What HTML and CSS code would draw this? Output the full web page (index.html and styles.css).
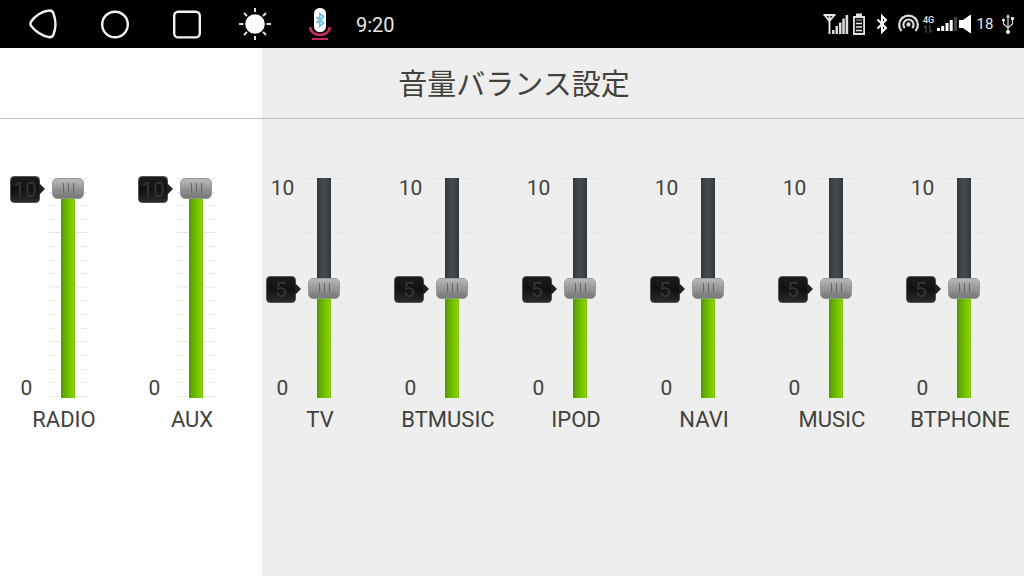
FILE: index.html
```html
<!DOCTYPE html>
<html lang="ja">
<head>
<meta charset="utf-8">
<meta name="viewport" content="width=device-width, initial-scale=1">
<title>音量バランス設定</title>
<link rel="stylesheet" href="styles.css">
</head>
<body>
<svg class="defs" aria-hidden="true">
  <symbol id="ticks" viewBox="0 0 38 220">
    <g class="ticks-high">
      <path d="M0 .5h38M0 54.500h38M0 109h38"/>
      <path d="M0 14.500h6M0 27.500h6M0 41.500h6M0 68.500h6M0 82.500h6M0 95.500h6M32 14.500h6M32 27.500h6M32 41.500h6M32 68.500h6M32 82.500h6M32 95.500h6"/>
    </g>
    <g class="ticks-low">
      <path d="M0 163.500h38M0 218.500h38"/>
      <path d="M0 122.500h6M0 136.500h6M0 150.500h6M0 177.500h6M0 191.500h6M0 204.500h6M32 122.500h6M32 136.500h6M32 150.500h6M32 177.500h6M32 191.500h6M32 204.500h6"/>
    </g>
  </symbol>
</svg>

<header class="status-bar">
  <nav class="nav-keys" aria-label="ナビゲーション">
    <button class="key" type="button" aria-label="戻る">
      <svg class="outline" width="28" height="30" viewBox="0 0 28 30"><path d="M2.200 12.500C6 6.500 13.500 2 20.500 1.500C22.500 1.400 23.500 2.200 24.300 4C27 11 27 19 24.500 25.500C23.600 27.500 22.500 28.500 20.500 28.300C13.500 27 6.500 22.500 2.200 17C1 15.300 1 14.200 2.200 12.500Z"/></svg>
    </button>
    <button class="key" type="button" aria-label="ホーム">
      <svg class="outline" width="28" height="30" viewBox="0 0 28 30"><circle cx="14" cy="15.500" r="12.800"/></svg>
    </button>
    <button class="key" type="button" aria-label="履歴">
      <svg class="outline" width="28" height="30" viewBox="0 0 28 30"><rect x="1.200" y="2.800" width="25.600" height="25.600" rx="4"/></svg>
    </button>
  </nav>
  <div class="quick-keys">
    <button class="key" type="button" aria-label="明るさ">
      <svg width="32" height="32" viewBox="0 0 32 32"><circle cx="16" cy="16" r="9.800" fill="#fff"/><path d="M16 0v4M16 28v4M0 16h4.500M27.500 16H32M5 5l3 3M24 24l3 3M27 5l-3 3M8 24l-3 3" stroke="#ddd" stroke-width="2"/></svg>
    </button>
    <button class="key" type="button" aria-label="音声">
      <svg width="22" height="34" viewBox="0 0 22 34"><rect x="5" y="1" width="12" height="24" rx="5.500" fill="#fff"/><path d="M7.500 10l7 6-3.700 3.500V6.500l3.700 3.300-7 6.200" fill="none" stroke="#6fc0ea" stroke-width="1.800"/><path d="M1 20c1.500 10.500 18.500 10.500 20 0" fill="none" stroke="#c52a60" stroke-width="2.800"/><path d="M3 32h16" stroke="#c52a60" stroke-width="2"/></svg>
    </button>
  </div>
  <time class="clock">9:20</time>
  <div class="indicators">
    <svg width="26" height="24" viewBox="0 0 26 24" aria-label="電波"><path d="M0.500 3h12M2 3.500l4.500 5.500L11 3.500M6.500 3v19" fill="none" stroke="#e8e8e8" stroke-width="1.900"/><path d="M9 18h2.500v4H9zM12.500 14H15v8h-2.500zM16 10.500h2.500V22H16zM19.300 6.500h2.500V22h-2.500zM22.600 3h2.600v19h-2.600z" fill="#ddd"/></svg>
    <svg width="16" height="24" viewBox="0 0 16 24" aria-label="電池"><path d="M5 1.500h6V4h3v19H2V4h3z" fill="#e9dfdf"/><path d="M3.800 6h8.400v15H3.800z" fill="#111"/><path d="M5 8h6" stroke="#777" stroke-width="1.500"/><path d="M5 11.500h6M5 15h6M5 18.500h6" stroke="#e5e5e5" stroke-width="1.700"/></svg>
    <svg width="26" height="24" viewBox="0 0 26 24" aria-label="Bluetooth"><path d="M8.500 7.500l8.500 8.500-4 4V4l4 4-8.500 8.500" fill="none" stroke="#fff" stroke-width="2"/></svg>
    <svg width="24" height="24" viewBox="0 0 24 24" aria-label="テザリング" fill="none" stroke="#ddd" stroke-width="2.300"><path d="M4.500 19a9.300 9.300 0 1 1 14 0M7.800 16a5 5 0 1 1 7.400 0"/><circle cx="11.500" cy="12.500" r="1" fill="#ddd"/></svg>
    <div class="network"><span class="network-type">4G</span><svg width="10" height="9" viewBox="0 0 10 9"><path d="M3 8V1L1 3M7 0v7l2-2" fill="none" stroke="#3c3c3c" stroke-width="1.500"/></svg></div>
    <svg width="20" height="24" viewBox="0 0 20 24" aria-label="モバイル通信"><path d="M0 16h3v3H0zM4.200 14h3v5h-3zM8.500 11h3v8h-3zM12.700 8h3v11h-3z" fill="#fff"/><path d="M17 5h3v14h-3z" fill="#444"/></svg>
    <svg width="14" height="24" viewBox="0 0 14 24" aria-label="音量"><path d="M0 8h4l7-5h1v18h-1l-7-5H0z" fill="#fff"/></svg>
    <span class="volume-level">18</span>
    <svg width="22" height="24" viewBox="0 0 22 24" aria-label="USB"><path d="M11 4v15M6.500 8v4l4.500 4 4.500-4V7" fill="none" stroke="#ddd" stroke-width="1.200"/><path d="M11 2l2 3.500H9zM14 5h3v3h-3z" fill="#ddd"/><circle cx="6.500" cy="8" r="1.600" fill="#ddd"/><circle cx="11" cy="20" r="2" fill="#fff"/></svg>
  </div>
</header>

<main class="settings">
  <h1 class="title">音量バランス設定</h1>
  <div class="mixer">
    <div class="channel" style="--level: 10">
      <div class="fader">
        <div class="scale"><span>10</span><span>0</span><output class="bubble" for="radio">10</output></div>
        <div class="slider"><svg class="ticks" aria-hidden="true"><use href="#ticks"/></svg><div class="track"></div><input class="range" id="radio" type="range" min="0" max="10" value="10"></div>
      </div>
      <label class="name" for="radio">RADIO</label>
    </div>
    <div class="channel" style="--level: 10">
      <div class="fader">
        <div class="scale"><span>10</span><span>0</span><output class="bubble" for="aux">10</output></div>
        <div class="slider"><svg class="ticks" aria-hidden="true"><use href="#ticks"/></svg><div class="track"></div><input class="range" id="aux" type="range" min="0" max="10" value="10"></div>
      </div>
      <label class="name" for="aux">AUX</label>
    </div>
    <div class="channel" style="--level: 5">
      <div class="fader">
        <div class="scale"><span>10</span><span>0</span><output class="bubble" for="tv">5</output></div>
        <div class="slider"><svg class="ticks" aria-hidden="true"><use href="#ticks"/></svg><div class="track"></div><input class="range" id="tv" type="range" min="0" max="10" value="5"></div>
      </div>
      <label class="name" for="tv">TV</label>
    </div>
    <div class="channel" style="--level: 5">
      <div class="fader">
        <div class="scale"><span>10</span><span>0</span><output class="bubble" for="btmusic">5</output></div>
        <div class="slider"><svg class="ticks" aria-hidden="true"><use href="#ticks"/></svg><div class="track"></div><input class="range" id="btmusic" type="range" min="0" max="10" value="5"></div>
      </div>
      <label class="name" for="btmusic">BTMUSIC</label>
    </div>
    <div class="channel" style="--level: 5">
      <div class="fader">
        <div class="scale"><span>10</span><span>0</span><output class="bubble" for="ipod">5</output></div>
        <div class="slider"><svg class="ticks" aria-hidden="true"><use href="#ticks"/></svg><div class="track"></div><input class="range" id="ipod" type="range" min="0" max="10" value="5"></div>
      </div>
      <label class="name" for="ipod">IPOD</label>
    </div>
    <div class="channel" style="--level: 5">
      <div class="fader">
        <div class="scale"><span>10</span><span>0</span><output class="bubble" for="navi">5</output></div>
        <div class="slider"><svg class="ticks" aria-hidden="true"><use href="#ticks"/></svg><div class="track"></div><input class="range" id="navi" type="range" min="0" max="10" value="5"></div>
      </div>
      <label class="name" for="navi">NAVI</label>
    </div>
    <div class="channel" style="--level: 5">
      <div class="fader">
        <div class="scale"><span>10</span><span>0</span><output class="bubble" for="music">5</output></div>
        <div class="slider"><svg class="ticks" aria-hidden="true"><use href="#ticks"/></svg><div class="track"></div><input class="range" id="music" type="range" min="0" max="10" value="5"></div>
      </div>
      <label class="name" for="music">MUSIC</label>
    </div>
    <div class="channel" style="--level: 5">
      <div class="fader">
        <div class="scale"><span>10</span><span>0</span><output class="bubble" for="btphone">5</output></div>
        <div class="slider"><svg class="ticks" aria-hidden="true"><use href="#ticks"/></svg><div class="track"></div><input class="range" id="btphone" type="range" min="0" max="10" value="5"></div>
      </div>
      <label class="name" for="btphone">BTPHONE</label>
    </div>
  </div>
</main>
<script src="mixer.js"></script>
</body>
</html>
```

FILE: styles.css
```css
* { box-sizing: border-box; }

body {
  margin: 0;
  min-height: 100vh;
  display: flex;
  flex-direction: column;
  font-family: Roboto, "Noto Sans CJK JP", sans-serif;
  color: #42423c;
}

.defs { position: absolute; width: 0; height: 0; }
.ticks-high { stroke: #e0e7f4; }
.ticks-low { stroke: #e0f2d6; }

/* Status bar */
.status-bar {
  display: flex;
  align-items: center;
  height: 48px;
  padding: 0 5px 0 29px;
  background: #000;
  color: #e6e6e6;
}
.status-bar svg { display: block; flex: none; }
.key {
  display: block;
  padding: 0;
  border: 0;
  background: none;
}
.outline { fill: none; stroke: #f2f2f2; stroke-width: 2.4px; }
.nav-keys { display: flex; gap: 44px; }
.quick-keys {
  display: flex;
  align-items: center;
  gap: 38px;
  margin-left: 38px;
}
.clock { margin: 2px 0 0 25px; font-size: 20px; }
.indicators {
  display: flex;
  align-items: center;
  gap: 2px;
  margin-left: auto;
}
.network { width: 12px; }
.network-type { display: block; font-size: 9px; font-weight: 500; line-height: 10px; }
.volume-level { width: 20px; font-size: 15px; text-align: center; }

/* Settings */
.settings {
  flex: 1;
  background: linear-gradient(to right, #fff 25.6%, #eee 25.6%);
}
.title {
  margin: 0;
  padding: 4px 0 0 4px;
  border-bottom: 1px solid #c0c0c0;
  font-size: 29px;
  font-weight: 400;
  line-height: 66px;
  text-align: center;
}
.mixer {
  display: grid;
  grid-template-columns: repeat(8, 1fr);
  padding-top: 59px;
}
.channel {
  display: flex;
  flex-direction: column;
  align-items: center;
}
.fader {
  display: grid;
  grid-template-columns: 45px 38px 37px;
  height: 220px;
}
.scale {
  position: relative;
  display: flex;
  flex-direction: column;
  justify-content: space-between;
  font-size: 21px;
  line-height: 20px;
  text-align: center;
}
.bubble {
  position: absolute;
  right: 9px;
  bottom: calc(var(--level) * 20px - 5px);
  width: 30px;
  height: 27px;
  border: 1px solid #555;
  border-radius: 4px;
  background: linear-gradient(#1c1c1c, #111 50%, #2a2a2a);
  color: #35352c;
  line-height: 26px;
}
.bubble::after {
  content: "";
  position: absolute;
  left: 28px;
  top: 6px;
  border: 6px solid transparent;
  border-left-color: #222;
  border-right: 0;
}
.slider { display: grid; justify-items: center; }
.slider > * { grid-area: 1 / 1; }
.ticks { width: 38px; height: 220px; }
.track {
  display: flex;
  align-items: flex-end;
  width: 14px;
  height: 220px;
  background: linear-gradient(to right, #33383b, #454c50 50%, #33383b);
}
.track::after {
  content: "";
  width: 100%;
  height: calc(var(--level) * 10%);
  background: linear-gradient(to right, #4c9a06, #65b000 30%, #8bd000 90%, #7abc10);
}

.range {
  appearance: none;
  writing-mode: vertical-lr;
  direction: rtl;
  width: 32px;
  height: 220px;
  margin: 0;
  background: none;
}
.range::-webkit-slider-thumb {
  appearance: none;
  width: 32px;
  height: 21px;
  border: 1px solid #999;
  border-radius: 5px;
  background:
    linear-gradient(#666, #666) 10px 4px / 1px 10px no-repeat,
    linear-gradient(#666, #666) 15px 4px / 1px 10px no-repeat,
    linear-gradient(#666, #666) 20px 4px / 1px 10px no-repeat,
    linear-gradient(#bbb, #999 45%, #777);
}
.name { margin-top: 8px; font-size: 22px; line-height: 28px; }
```

FILE: mixer.js
```js
document.querySelectorAll(".range").forEach((range) => {
  const channel = range.closest(".channel");
  range.addEventListener("input", () => {
    channel.style.setProperty("--level", range.value);
    channel.querySelector(".bubble").value = range.value;
  });
});
```
